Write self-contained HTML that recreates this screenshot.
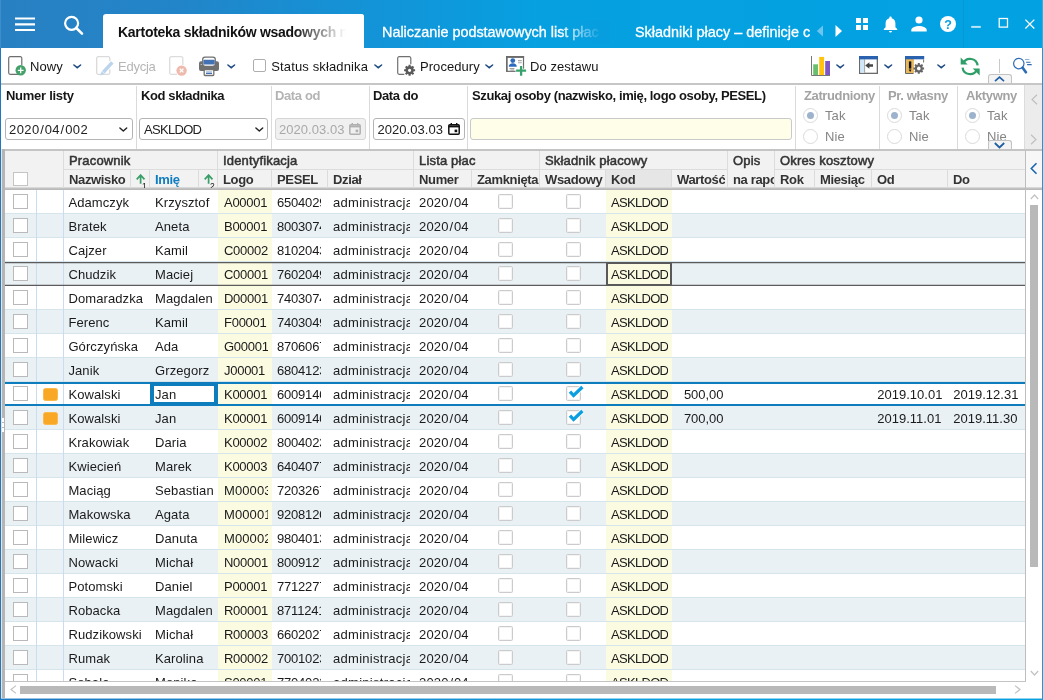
<!DOCTYPE html>
<html lang="pl"><head><meta charset="utf-8"><title>Kartoteka składników wsadowych</title>
<style>
*{box-sizing:border-box}
html,body{margin:0;padding:0}
body{width:1043px;height:700px;position:relative;overflow:hidden;background:#fff;font-family:"Liberation Sans",sans-serif;font-size:13px;color:#222}
.abs{position:absolute}
svg{position:absolute;overflow:visible}
.t{position:absolute;white-space:nowrap;line-height:16px}
.b{font-weight:bold}
#hdr{left:0;top:0;width:1043px;height:48px;background:linear-gradient(to right,#2880c2 0px,#2285c9 180px,#1394d8 380px,#06a0e0 540px,#02a2e2 1043px)}
.tab1{left:103px;top:14px;width:261px;height:34px;background:#fff;border-radius:3px 3px 0 0;overflow:hidden}
.tabt{position:absolute;top:23px;font-size:14.4px;-webkit-text-stroke:0.3px #fff;line-height:18px;white-space:nowrap;color:#fff;overflow:hidden}
.tb{position:absolute;top:58px;line-height:18px;font-size:13px;letter-spacing:0.05px;color:#161616;white-space:nowrap}
.lbl{position:absolute;top:87px;line-height:18px;font-weight:bold;font-size:13px;letter-spacing:-0.38px;white-space:nowrap;color:#161616}
.inp{position:absolute;top:118px;height:22px;border:1px solid #b4b4b4;border-radius:3px;background:#fff;line-height:22px;font-size:13px;padding-left:4px;white-space:nowrap;overflow:hidden}
.vl{position:absolute;top:86px;width:1px;height:63px;background:#dadada}
.rad{position:absolute;width:15px;height:15px;border:1px solid #dadada;border-radius:50%;background:#fff}
.rad.on:after{content:"";position:absolute;left:2.7px;top:2.7px;width:7.600px;height:7.600px;border-radius:50%;background:#9db2cd}
.rt{position:absolute;line-height:16px;font-size:13px;letter-spacing:0.1px;color:#858585;white-space:nowrap}
.gh{position:absolute;line-height:16px;font-weight:bold;font-size:13px;letter-spacing:-0.35px;color:#333;white-space:nowrap;overflow:hidden}
.gm{font-weight:normal;-webkit-text-stroke:0.5px #333;letter-spacing:0.17px}
.hv{position:absolute;width:1px;background:#dcdcdc}
.row{position:absolute;left:5px;width:1020px;height:24px;border-bottom:1px solid #d6e4ec}
.row.alt{background:#e9f1f5}
.c{position:absolute;top:0;height:23px;line-height:26px;padding-left:5px;white-space:nowrap;overflow:hidden;font-size:13px;letter-spacing:0.1px;color:#1a1a1a}
.n{letter-spacing:-0.2px}
.y{background:#fdfde6}
.alt .n{letter-spacing:-0.2px}
.y{background:#fbfbe2}
.cb{position:absolute;width:15px;height:15px;border:1px solid #b9b9b9;background:#fff}
.cb2{position:absolute;width:15px;height:15px;border:1px solid #cbcbcb;border-radius:1.5px;background:#fff;box-shadow:inset 0 0 0 0.5px rgba(200,200,200,0.4)}
.org{position:absolute;left:38px;top:6px;width:15px;height:13px;border-radius:2.5px;background:#f9a825;border:1px solid #fbb94a}
</style></head>
<body>
<div id="app" style="will-change:transform;position:absolute;left:0;top:0;width:1043px;height:700px;overflow:hidden">
<div id="hdr" class="abs">
<svg style="left:15px;top:17px" width="20" height="14" viewBox="0 0 20 14"><path d="M0 1.5h20M0 7.3h20M0 13h20" stroke="#fff" stroke-width="2.2" fill="none"/></svg>
<svg style="left:62px;top:14px" width="22" height="22" viewBox="0 0 22 22"><circle cx="9.600" cy="9.300" r="6.500" stroke="#fff" stroke-width="2.200" fill="none"/><path d="M14.300 14L20 19.700" stroke="#fff" stroke-width="2.600" stroke-linecap="round"/></svg>
<div class="abs tab1"><div class="tabt b" style="left:15px;top:9px;color:#111;-webkit-text-stroke:0;width:232px;font-size:14px;letter-spacing:-0.28px">Kartoteka składników wsadowych n</div><div class="abs" style="left:190px;top:0;width:71px;height:34px;background:linear-gradient(to right,rgba(255,255,255,0),rgba(255,255,255,1) 75%)"></div></div>
<div class="tabt" style="left:382px;width:222px">Naliczanie podstawowych list płac</div>
<div class="abs" style="left:560px;top:20px;width:50px;height:24px;background:linear-gradient(to right,rgba(7,158,223,0),rgba(7,158,223,1) 85%)"></div>
<div class="tabt" style="left:635px;width:176px">Składniki płacy – definicje c</div>
<svg style="left:816.200px;top:25px" width="8" height="12" viewBox="0 0 8 12"><path d="M7 0.5L0.8 6L7 11.5Z" fill="#6cc5ee"/></svg>
<svg style="left:835px;top:25px" width="8" height="12" viewBox="0 0 8 12"><path d="M0.5 0L7 6L0.5 12Z" fill="#fff"/></svg>
<svg style="left:856px;top:18px" width="12" height="12" viewBox="0 0 12 12"><path d="M0 0h5v5H0zM7 0h5v5H7zM0 7h5v5H0zM7 7h5v5H7z" fill="#fff"/></svg>
<svg style="left:883px;top:16px" width="15" height="17" viewBox="0 0 15 17"><path d="M7.5 0.6c-.7 0-1.2.5-1.2 1.2v.5C4 2.9 2.6 4.9 2.6 7.3v4L.8 13.1v.9h13.4v-.9l-1.8-1.8v-4c0-2.4-1.400-4.400-3.700-5V1.800c0-.7-.5-1.200-1.200-1.200zM6 15h3c0 .9-.7 1.500-1.500 1.500S6 15.900 6 15z" fill="#fff"/></svg>
<svg style="left:911px;top:16px" width="16" height="16" viewBox="0 0 16 16"><circle cx="8" cy="4" r="3.6" fill="#fff"/><path d="M0.300 15.500v-1.500c0-2.600 5.100-4 7.700-4s7.700 1.400 7.700 4v1.500z" fill="#fff"/></svg>
<svg style="left:940px;top:16px" width="16" height="16" viewBox="0 0 16 16"><circle cx="8" cy="8" r="8" fill="#fff"/><text x="8" y="12.600" font-family="Liberation Sans,sans-serif" font-weight="bold" font-size="12.500" text-anchor="middle" fill="#07a0e0">?</text></svg>
<div class="abs" style="left:963px;top:0;width:1px;height:48px;background:#0996d4"></div>
<div class="abs" style="left:1042px;top:0;width:1px;height:48px;background:#2cb2e8"></div>
<div class="abs" style="left:0;top:0;width:1px;height:48px;background:#3b8dcc"></div>
<svg style="left:971px;top:18px" width="64" height="12" viewBox="0 0 64 12"><path d="M0.200 8.900h9.600" stroke="#fff" stroke-opacity="0.720" stroke-width="2" fill="none"/><rect x="28.200" y="0.500" width="8.300" height="8.600" stroke="#fff" stroke-width="1.250" fill="none"/><path d="M54.400 1.600l8.900 8.900M63.300 1.600l-8.900 8.900" stroke="#fff" stroke-width="1.300" fill="none"/></svg>
</div>
<div class="abs" id="tbar" style="left:0;top:48px;width:1043px;height:35px;background:#fff"></div>
<svg style="left:8px;top:56px" width="19" height="20" viewBox="0 0 19 20"><path d="M11.500 18.300H2.200a1.500 1.500 0 0 1-1.500-1.500V2.200A1.500 1.500 0 0 1 2.200.7h10.100a1.500 1.500 0 0 1 1.500 1.500V9" stroke="#6e6e6e" stroke-width="1.200" fill="none"/><circle cx="12.700" cy="14.300" r="5.200" fill="#45a06a"/><path d="M12.700 11.400v5.800M9.800 14.300h5.800" stroke="#fff" stroke-width="1.300"/></svg>
<div class="tb" style="left:30px">Nowy</div>
<svg style="left:73.2px;top:63.7px" width="9" height="5" viewBox="0 0 9 5"><path d="M0.900 1L4.250 3.700L7.600 1" stroke="#1d4a82" stroke-width="1.500" fill="none" stroke-linecap="round" stroke-linejoin="miter"/></svg>
<svg style="left:96px;top:56px" width="19" height="20" viewBox="0 0 19 20"><path d="M13.800 13.500v3.300a1.500 1.500 0 0 1-1.500 1.500H2.200a1.500 1.500 0 0 1-1.500-1.500V2.200A1.500 1.500 0 0 1 2.200.7h10.100a1.500 1.500 0 0 1 1.500 1.500V5" stroke="#dadada" stroke-width="1.300" fill="none"/><path d="M16.300 6.400L7.300 16.200" stroke="#bcd5ec" stroke-width="3.500"/><path d="M5.600 15.200l3 2.700-4.500 1.600z" fill="#bcd5ec"/></svg>
<div class="tb" style="left:118px;color:#b5b5b5;letter-spacing:-0.250px">Edycja</div>
<svg style="left:169px;top:56px" width="19" height="20" viewBox="0 0 19 20"><path d="M8 18.300H2.200a1.500 1.500 0 0 1-1.500-1.500V2.200A1.500 1.500 0 0 1 2.200.7h10.100a1.500 1.500 0 0 1 1.500 1.500V9" stroke="#dcdcdc" stroke-width="1.300" fill="none"/><circle cx="12.600" cy="14.600" r="5.200" fill="#efbaae"/><path d="M10.800 12.800l3.600 3.600M14.400 12.800l-3.600 3.600" stroke="#fff" stroke-width="1.300"/></svg>
<svg style="left:199px;top:56px" width="20" height="20" viewBox="0 0 20 20"><rect x="0" y="5.200" width="20" height="9.800" rx="2" fill="#707070"/><path d="M3.100 9V3.400A2.800 2.800 0 0 1 5.900 0.600h8.200a2.800 2.800 0 0 1 2.800 2.800V9z" fill="#707070"/><path d="M4.300 7.800V3.600A1.800 1.800 0 0 1 6.100 1.800h7.800a1.800 1.800 0 0 1 1.800 1.800V7.800a2 2 0 0 1-2 2H6.300a2 2 0 0 1-2-2z" fill="#fff"/><rect x="4.400" y="3.800" width="11.300" height="4.800" rx="0.800" fill="#4272b4"/><rect x="5.200" y="13.500" width="9.600" height="6" rx="0.800" fill="#fff" stroke="#707070" stroke-width="1.300"/><path d="M7 15.900h6" stroke="#aac2e4" stroke-width="1.400"/><path d="M7 17.400h6" stroke="#4272b4" stroke-width="1.200"/><rect x="1.600" y="8" width="1.400" height="0.900" fill="#bbb"/></svg>
<svg style="left:227.2px;top:63.7px" width="9" height="5" viewBox="0 0 9 5"><path d="M0.900 1L4.250 3.700L7.600 1" stroke="#1d4a82" stroke-width="1.500" fill="none" stroke-linecap="round" stroke-linejoin="miter"/></svg>
<div class="abs" style="left:253px;top:59px;width:13px;height:13px;border:1px solid #aeaeae;border-radius:2px;background:#fff"></div>
<div class="tb" style="left:271.300px;letter-spacing:0.130px">Status składnika</div>
<svg style="left:374.2px;top:63.7px" width="9" height="5" viewBox="0 0 9 5"><path d="M0.900 1L4.250 3.700L7.600 1" stroke="#1d4a82" stroke-width="1.500" fill="none" stroke-linecap="round" stroke-linejoin="miter"/></svg>
<svg style="left:397px;top:56px" width="19" height="20" viewBox="0 0 19 20"><path d="M7.300 18.300H2.200a1.500 1.500 0 0 1-1.500-1.500V2.200A1.500 1.500 0 0 1 2.200.7h10.100a1.500 1.500 0 0 1 1.500 1.500V8.200" stroke="#707070" stroke-width="1.200" fill="none"/><g transform="translate(12.600 14.300)"><circle r="2.900" fill="none" stroke="#5a5a5a" stroke-width="2.600"/><g stroke="#5a5a5a" stroke-width="2.100"><path d="M0-5.500v2M0 5.500v-2M-5.500 0h2M5.500 0h-2M-3.900-3.900l1.400 1.400M3.900 3.900l-1.400-1.400M-3.900 3.900l1.400-1.400M3.900-3.900l-1.400 1.400"/></g></g></svg>
<div class="tb" style="left:420px">Procedury</div>
<svg style="left:485.2px;top:63.7px" width="9" height="5" viewBox="0 0 9 5"><path d="M0.900 1L4.250 3.700L7.600 1" stroke="#1d4a82" stroke-width="1.500" fill="none" stroke-linecap="round" stroke-linejoin="miter"/></svg>
<svg style="left:506px;top:56px" width="21" height="21" viewBox="0 0 21 21"><rect x="0.700" y="0.700" width="16.800" height="14.600" fill="#fff" stroke="#6a6a6a" stroke-width="1.200"/><path d="M0.100 1h18" stroke="#6a6a6a" stroke-width="1.800"/><path d="M0.800 0.200v15.600" stroke="#6a6a6a" stroke-width="1.500"/><circle cx="6.800" cy="4.600" r="2.400" fill="#2e6bbd"/><path d="M2.800 10.700c0-2.200 1.600-3.400 4-3.400s4 1.200 4 3.400z" fill="#2e6bbd"/><path d="M12 4.600h3.800M12 6.800h3.800" stroke="#a8a8a8" stroke-width="1.100"/><path d="M3.500 12.600h5M4.500 14h3.500" stroke="#999" stroke-width="1"/><rect x="9.200" y="9.500" width="11.500" height="11.500" fill="#fff" opacity="0"/><path d="M15.100 9.400v11M9.600 14.700h11" stroke="#fff" stroke-width="4"/><path d="M15.100 10v9.700M10.100 14.700h10" stroke="#37a26b" stroke-width="2.300"/></svg>
<div class="tb" style="left:530px">Do zestawu</div>
<svg style="left:811px;top:56px" width="20" height="20" viewBox="0 0 20 20"><rect x="2.200" y="8.300" width="4.800" height="11" fill="#6abf6e"/><rect x="8.200" y="0.900" width="4.900" height="18.400" fill="#ffc20e"/><rect x="14.200" y="5" width="4.800" height="14.300" fill="#7e55c4"/><path d="M0.500 0v19.500H19" stroke="#777" stroke-width="1" fill="none"/></svg>
<svg style="left:836.2px;top:63.7px" width="9" height="5" viewBox="0 0 9 5"><path d="M0.900 1L4.250 3.700L7.600 1" stroke="#1d4a82" stroke-width="1.500" fill="none" stroke-linecap="round" stroke-linejoin="miter"/></svg>
<svg style="left:859px;top:56px" width="19" height="18" viewBox="0 0 19 18"><rect x="0.650" y="0.650" width="17.700" height="16.700" fill="#fff" stroke="#6a6a6a" stroke-width="1.300"/><rect x="1.300" y="3.400" width="4" height="13.300" fill="#cfe8fa"/><path d="M5.600 3.400v13.400" stroke="#9a9a9a" stroke-width="0.900"/><rect x="0" y="0" width="19" height="3.400" fill="#2b62b0"/><path d="M14 9.500h-5" stroke="#444" stroke-width="2.500"/><path d="M6.200 9.500l4.200-3.200v6.400z" fill="#444"/></svg>
<svg style="left:884.2px;top:63.7px" width="9" height="5" viewBox="0 0 9 5"><path d="M0.900 1L4.250 3.700L7.600 1" stroke="#1d4a82" stroke-width="1.500" fill="none" stroke-linecap="round" stroke-linejoin="miter"/></svg>
<svg style="left:905px;top:56px" width="20" height="18" viewBox="0 0 20 18"><rect x="0.500" y="3" width="8.400" height="14.400" fill="#e8b95c"/><path d="M0.500 3v14.500h8" stroke="#666" stroke-width="1" fill="none"/><path d="M18.600 3.500v3" stroke="#777" stroke-width="1"/><rect x="0" y="0" width="19.200" height="3.300" fill="#2b62b0"/><path d="M5.100 5.400v7.200" stroke="#111" stroke-width="2.400"/><path d="M3.700 13.600h2.800l-1.400 2.400z" fill="#111"/><g transform="translate(13.800 12.400)"><circle r="2.900" fill="#fff" stroke="#666" stroke-width="2.200"/><g stroke="#666" stroke-width="2"><path d="M0-5.300v2M0 5.300v-2M-5.300 0h2M5.300 0h-2M-3.750-3.750l1.400 1.400M3.750 3.750l-1.400-1.400M-3.750 3.750l1.400-1.400M3.750-3.750l-1.400 1.400"/></g></g></svg>
<svg style="left:936.5px;top:63.7px" width="9" height="5" viewBox="0 0 9 5"><path d="M0.900 1L4.250 3.700L7.600 1" stroke="#1d4a82" stroke-width="1.500" fill="none" stroke-linecap="round" stroke-linejoin="miter"/></svg>
<svg style="left:959.500px;top:55.500px" width="21" height="21" viewBox="0 0 21 21"><g fill="none" stroke="#2f9e68" stroke-width="2.200"><path d="M17.630 9.440A7.600 7.600 0 0 0 3.210 7.290"/><path d="M2.570 11.560A7.600 7.600 0 0 0 16.990 13.710"/></g><path d="M0.700 1.500v7h7z" fill="#2f9e68"/><path d="M19.700 19.500v-7h-7z" fill="#2f9e68"/></svg>
<div class="abs" style="left:999px;top:59px;width:1px;height:14px;background:#c8c8c8"></div>
<svg style="left:1012.200px;top:57px" width="21" height="18" viewBox="0 0 21 18"><circle cx="6.800" cy="6.600" r="5.200" fill="#fff" stroke="#2e6cb5" stroke-width="1.200"/><path d="M10.600 10.800l3.300 4.400" stroke="#2e6cb5" stroke-width="2.700" stroke-linecap="round"/><path d="M13 2.500h4.400" stroke="#8eb0da" stroke-width="1.100"/><path d="M14.100 5.300h4.400M15.100 7.600h4.600" stroke="#2e6cb5" stroke-width="1.100"/></svg>
<div class="abs" style="left:1px;top:83px;width:1041px;height:2px;background:#c6c6c6"></div>
<div class="abs" style="left:988px;top:74px;width:24px;height:9px;border:1px solid #c2c2c2;border-bottom:none;border-radius:3px 3px 0 0;background:#f4f4f4"></div>
<svg style="left:994.300px;top:76px" width="11" height="6" viewBox="0 0 11 6"><path d="M1 5.200L5.500 1.200L10 5.200" stroke="#2560a4" stroke-width="1.700" fill="none" stroke-linecap="butt" stroke-linejoin="miter"/></svg>
<div class="abs" id="filt" style="left:1px;top:85px;width:1041px;height:64px;background:#fff"></div>
<div class="vl" style="left:136px"></div>
<div class="vl" style="left:271px"></div>
<div class="vl" style="left:369px"></div>
<div class="vl" style="left:467px"></div>
<div class="vl" style="left:795px"></div>
<div class="vl" style="left:879px"></div>
<div class="vl" style="left:957px"></div>
<div class="lbl" style="left:6px;letter-spacing:-0.270px">Numer listy</div>
<div class="lbl" style="left:141px">Kod składnika</div>
<div class="lbl" style="left:275px;color:#b4b4b4">Data od</div>
<div class="lbl" style="left:373px">Data do</div>
<div class="lbl" style="left:472px">Szukaj osoby (nazwisko, imię, logo osoby, PESEL)</div>
<div class="inp" style="left:5px;width:128px;padding-left:3px;letter-spacing:0.400px">2020<span style="margin:0 0.600px">/</span>04<span style="margin:0 0.600px">/</span>002</div>
<svg style="left:119px;top:127px" width="9" height="6" viewBox="0 0 9 6"><path d="M0.900 0.900L4.300 4L7.700 0.900" stroke="#222" stroke-width="1.400" fill="none" stroke-linecap="round" stroke-linejoin="round"/></svg>
<div class="inp" style="left:139px;width:129px;letter-spacing:-0.700px">ASKLDOD</div>
<svg style="left:255px;top:127px" width="9" height="6" viewBox="0 0 9 6"><path d="M0.900 0.900L4.300 4L7.700 0.900" stroke="#222" stroke-width="1.400" fill="none" stroke-linecap="round" stroke-linejoin="round"/></svg>
<div class="inp" style="left:275px;width:91px;background:#f0f0f0;border-color:#d6d6d6;color:#a9a9a9;padding-left:3px;letter-spacing:0.050px">2020.03.03</div>
<svg style="left:349px;top:123px" width="12" height="12" viewBox="0 0 12 12"><rect x="0.800" y="1.800" width="10.400" height="9.400" rx="1" fill="none" stroke="#b0b0b0" stroke-width="1.500"/><path d="M0.800 3.400h10.400" stroke="#b0b0b0" stroke-width="2"/><path d="M3.300 0v2.200M8.700 0v2.200" stroke="#b0b0b0" stroke-width="1.400"/><rect x="6.600" y="6.600" width="2.600" height="2.600" fill="#b0b0b0"/></svg>
<div class="inp" style="left:373px;width:92px;padding-left:3.500px;letter-spacing:0.050px">2020.03.03</div>
<svg style="left:448px;top:123px" width="12" height="12" viewBox="0 0 12 12"><rect x="0.800" y="1.800" width="10.400" height="9.400" rx="1" fill="none" stroke="#111" stroke-width="1.500"/><path d="M0.800 3.400h10.400" stroke="#111" stroke-width="2"/><path d="M3.300 0v2.200M8.700 0v2.200" stroke="#111" stroke-width="1.400"/><rect x="6.600" y="6.600" width="2.600" height="2.600" fill="#111"/></svg>
<div class="inp" style="left:470px;width:322px;background:#fffee9;border-color:#c9c9c9"></div>
<div class="lbl" style="left:804px;color:#a3a3a3">Zatrudniony</div>
<div class="rad on" style="left:803px;top:108px"></div><div class="rt" style="left:825px;top:108px">Tak</div>
<div class="rad" style="left:803px;top:129px"></div><div class="rt" style="left:825px;top:129px">Nie</div>
<div class="lbl" style="left:888px;color:#a3a3a3">Pr. własny</div>
<div class="rad on" style="left:887px;top:108px"></div><div class="rt" style="left:909px;top:108px">Tak</div>
<div class="rad" style="left:887px;top:129px"></div><div class="rt" style="left:909px;top:129px">Nie</div>
<div class="lbl" style="left:966px;color:#a3a3a3">Aktywny</div>
<div class="rad on" style="left:965px;top:108px"></div><div class="rt" style="left:987px;top:108px">Tak</div>
<div class="rad" style="left:965px;top:129px"></div><div class="rt" style="left:987px;top:129px">Nie</div>
<div class="abs" style="left:1024px;top:85px;width:18px;height:64px;background:#ececec;border-left:1px solid #dcdcdc"></div>
<svg style="left:1030.600px;top:94px" width="7" height="11" viewBox="0 0 7 11"><path d="M6 0.800L1 5.500L6 10.200" stroke="#c0c0c0" stroke-width="1.200" fill="none"/></svg>
<svg style="left:1030.400px;top:133.600px" width="7" height="11" viewBox="0 0 7 11"><path d="M1 0.800L6 5.500L1 10.200" stroke="#c0c0c0" stroke-width="1.200" fill="none"/></svg>
<div class="abs" style="left:988px;top:140px;width:24px;height:9px;border:1px solid #c2c2c2;border-bottom:none;border-radius:3px 3px 0 0;background:#f4f4f4"></div>
<svg style="left:994px;top:142px" width="11" height="7" viewBox="0 0 11 7"><path d="M0.800 1L5.500 5.400L10.200 1" stroke="#1f5f9f" stroke-width="1.800" fill="none" stroke-linecap="butt" stroke-linejoin="miter"/></svg>
<div class="abs" style="left:2px;top:149px;width:1040px;height:2px;background:#c4c4c4"></div>
<div class="abs" style="left:1px;top:149px;width:1px;height:549px;background:#e9e3e0"></div>
<div class="abs" style="left:2px;top:149px;width:3px;height:549px;background:#b5b5b5"></div>
<div class="abs" style="left:2px;top:418px;width:2px;height:4px;background:#fff"></div>
<div class="abs" style="left:2px;top:423px;width:2px;height:4px;background:#fff"></div>
<div class="abs" style="left:2px;top:428px;width:2px;height:4px;background:#fff"></div>
<div class="abs" id="ghead" style="left:5px;top:151px;width:1037px;height:37px;background:#f2f2f2"></div>
<div class="abs" style="left:606px;top:170px;width:66px;height:18px;background:#e6e6e6"></div>
<div class="abs" style="left:5px;top:187px;width:1037px;height:3px;background:linear-gradient(to bottom,#d8d8d8 0,#d8d8d8 1px,#c2c2c2 1px,#c2c2c2 2px,#b9b9b9 2px)"></div>
<div class="abs" style="left:64px;top:169px;width:664px;height:1px;background:#dcdcdc"></div>
<div class="abs" style="left:775px;top:169px;width:250px;height:1px;background:#dcdcdc"></div>
<div class="hv" style="left:63px;top:151px;height:37px"></div>
<div class="hv" style="left:217px;top:151px;height:37px"></div>
<div class="hv" style="left:413px;top:151px;height:37px"></div>
<div class="hv" style="left:539px;top:151px;height:37px"></div>
<div class="hv" style="left:727px;top:151px;height:37px"></div>
<div class="hv" style="left:774px;top:151px;height:37px"></div>
<div class="hv" style="left:130px;top:170px;height:18px"></div>
<div class="hv" style="left:149px;top:170px;height:18px"></div>
<div class="hv" style="left:198px;top:170px;height:18px"></div>
<div class="hv" style="left:271px;top:170px;height:18px"></div>
<div class="hv" style="left:327px;top:170px;height:18px"></div>
<div class="hv" style="left:471px;top:170px;height:18px"></div>
<div class="hv" style="left:605px;top:170px;height:18px"></div>
<div class="hv" style="left:671px;top:170px;height:18px"></div>
<div class="hv" style="left:814px;top:170px;height:18px"></div>
<div class="hv" style="left:871px;top:170px;height:18px"></div>
<div class="hv" style="left:947px;top:170px;height:18px"></div>
<div class="gh gm" style="left:69px;top:153px;width:140px">Pracownik</div>
<div class="gh gm" style="left:223px;top:153px;width:180px">Identyfikacja</div>
<div class="gh gm" style="left:419px;top:153px;width:110px">Lista płac</div>
<div class="gh gm" style="left:545px;top:153px;width:170px">Składnik płacowy</div>
<div class="gh gm" style="left:733px;top:153px;width:40px">Opis</div>
<div class="gh gm" style="left:780px;top:153px;width:200px">Okres kosztowy</div>
<div class="gh" style="left:69px;top:172px;width:61px;">Nazwisko</div>
<div class="gh" style="left:155px;top:172px;width:43px;color:#0f7cc0">Imię</div>
<div class="gh" style="left:223px;top:172px;width:48px;">Logo</div>
<div class="gh" style="left:277px;top:172px;width:50px;">PESEL</div>
<div class="gh" style="left:333px;top:172px;width:80px;">Dział</div>
<div class="gh" style="left:419px;top:172px;width:52px;">Numer</div>
<div class="gh" style="left:477px;top:172px;width:62px;">Zamknięta</div>
<div class="gh" style="left:545px;top:172px;width:60px;">Wsadowy</div>
<div class="gh" style="left:611px;top:172px;width:60px;">Kod</div>
<div class="gh" style="left:677px;top:172px;width:48px;text-align:right">Wartość</div>
<div class="gh" style="left:733px;top:172px;width:41px;">na raport</div>
<div class="gh" style="left:780px;top:172px;width:34px;">Rok</div>
<div class="gh" style="left:820px;top:172px;width:51px;">Miesiąc</div>
<div class="gh" style="left:877px;top:172px;width:60px;">Od</div>
<div class="gh" style="left:953px;top:172px;width:60px;">Do</div>
<svg style="left:136px;top:174px;overflow:hidden" width="14" height="14" viewBox="0 0 14 14"><path d="M4.600 9.800V1.200M0.700 5.300L4.600 1.100L8.500 5.300" stroke="#3a9e68" stroke-width="1.700" fill="none"/><text x="6" y="14.600" font-family="Liberation Sans,sans-serif" font-size="8.500" fill="#111">1</text></svg>
<svg style="left:204.4px;top:174px;overflow:hidden" width="14" height="14" viewBox="0 0 14 14"><path d="M4.600 9.800V1.200M0.700 5.300L4.600 1.100L8.500 5.300" stroke="#3a9e68" stroke-width="1.700" fill="none"/><text x="6" y="14.600" font-family="Liberation Sans,sans-serif" font-size="8.500" fill="#111">2</text></svg>
<div class="cb" style="left:13px;top:172px;height:14px;border-color:#c4c4c4"></div>
<div class="abs" style="left:1026px;top:151px;width:16px;height:36px;background:#f7f7f7"></div>
<svg style="left:1030px;top:162.400px" width="8" height="13" viewBox="0 0 8 13"><path d="M6.500 1.200L1.300 6.500L6.500 11.800" stroke="#1c66b0" stroke-width="1.600" fill="none"/></svg>
<div class="abs" style="left:1025px;top:151px;width:1px;height:531px;background:#bdbdbd"></div>
<div class="abs" style="left:1026px;top:190px;width:16px;height:492px;background:#fff"></div>
<svg style="left:1029.500px;top:194.300px" width="9" height="6" viewBox="0 0 9 6"><path d="M0.800 5L4.500 1L8.200 5" stroke="#c2c2c2" stroke-width="1.200" fill="none"/></svg>
<div class="abs" style="left:1030px;top:205px;width:8px;height:361.700px;background:#b9b9b9"></div>
<svg style="left:1029.500px;top:669.500px" width="9" height="6" viewBox="0 0 9 6"><path d="M0.800 1L4.500 5L8.200 1" stroke="#c2c2c2" stroke-width="1.200" fill="none"/></svg>
<div class="abs" id="gbody" style="left:0;top:190px;width:1025px;height:491px;overflow:hidden">
<div class="row" style="top:0px"><div class="abs" style="left:31px;top:0;width:1px;height:24px;background:#c9dcf0"></div><div class="abs" style="left:58px;top:0;width:1px;height:24px;background:#c9dcf0"></div><div class="cb" style="left:8px;top:4px"></div><div class="c" style="left:59px;width:86px;padding-left:4.400px">Adamczyk</div><div class="c" style="left:145px;width:63px">Krzysztof</div><div class="c y" style="left:213px;width:54px;padding:0"></div><div class="c n" style="left:213px;width:49.500px;padding-left:6px;letter-spacing:-0.270px">A00001</div><div class="c n" style="left:267px;width:48.900px">6504029</div><div class="c" style="left:323px;width:81.500px;letter-spacing:0.280px">administracja</div><div class="c" style="left:409px;width:58px;letter-spacing:0.200px">2020<span style="margin:0 0.700px">/</span>04</div><div class="cb2" style="left:493px;top:4px"></div><div class="cb2" style="left:561px;top:4px"></div><div class="c y" style="left:601px;width:66px;padding:0"></div><div class="c" style="left:601px;width:61.500px;letter-spacing:-0.700px">ASKLDOD</div></div>
<div class="row alt" style="top:24px"><div class="abs" style="left:31px;top:0;width:1px;height:24px;background:#c9dcf0"></div><div class="abs" style="left:58px;top:0;width:1px;height:24px;background:#c9dcf0"></div><div class="cb" style="left:8px;top:4px"></div><div class="c" style="left:59px;width:86px;padding-left:4.400px">Bratek</div><div class="c" style="left:145px;width:63px">Aneta</div><div class="c y" style="left:213px;width:54px;padding:0"></div><div class="c n" style="left:213px;width:49.500px;padding-left:6px;letter-spacing:-0.270px">B00001</div><div class="c n" style="left:267px;width:48.900px">8003074</div><div class="c" style="left:323px;width:81.500px;letter-spacing:0.280px">administracja</div><div class="c" style="left:409px;width:58px;letter-spacing:0.200px">2020<span style="margin:0 0.700px">/</span>04</div><div class="cb2" style="left:493px;top:4px"></div><div class="cb2" style="left:561px;top:4px"></div><div class="c y" style="left:601px;width:66px;padding:0"></div><div class="c" style="left:601px;width:61.500px;letter-spacing:-0.700px">ASKLDOD</div></div>
<div class="row" style="top:48px"><div class="abs" style="left:31px;top:0;width:1px;height:24px;background:#c9dcf0"></div><div class="abs" style="left:58px;top:0;width:1px;height:24px;background:#c9dcf0"></div><div class="cb" style="left:8px;top:4px"></div><div class="c" style="left:59px;width:86px;padding-left:4.400px">Cajzer</div><div class="c" style="left:145px;width:63px">Kamil</div><div class="c y" style="left:213px;width:54px;padding:0"></div><div class="c n" style="left:213px;width:49.500px;padding-left:6px;letter-spacing:-0.270px">C00002</div><div class="c n" style="left:267px;width:48.900px">8102043</div><div class="c" style="left:323px;width:81.500px;letter-spacing:0.280px">administracja</div><div class="c" style="left:409px;width:58px;letter-spacing:0.200px">2020<span style="margin:0 0.700px">/</span>04</div><div class="cb2" style="left:493px;top:4px"></div><div class="cb2" style="left:561px;top:4px"></div><div class="c y" style="left:601px;width:66px;padding:0"></div><div class="c" style="left:601px;width:61.500px;letter-spacing:-0.700px">ASKLDOD</div></div>
<div class="row alt" style="top:72px"><div class="abs" style="left:31px;top:0;width:1px;height:24px;background:#c9dcf0"></div><div class="abs" style="left:58px;top:0;width:1px;height:24px;background:#c9dcf0"></div><div class="cb" style="left:8px;top:4px"></div><div class="c" style="left:59px;width:86px;padding-left:4.400px">Chudzik</div><div class="c" style="left:145px;width:63px">Maciej</div><div class="c y" style="left:213px;width:54px;padding:0"></div><div class="c n" style="left:213px;width:49.500px;padding-left:6px;letter-spacing:-0.270px">C00001</div><div class="c n" style="left:267px;width:48.900px">7602049</div><div class="c" style="left:323px;width:81.500px;letter-spacing:0.280px">administracja</div><div class="c" style="left:409px;width:58px;letter-spacing:0.200px">2020<span style="margin:0 0.700px">/</span>04</div><div class="cb2" style="left:493px;top:4px"></div><div class="cb2" style="left:561px;top:4px"></div><div class="c y" style="left:601px;width:66px;padding:0"></div><div class="c" style="left:601px;width:61.500px;letter-spacing:-0.700px">ASKLDOD</div></div>
<div class="row" style="top:96px"><div class="abs" style="left:31px;top:0;width:1px;height:24px;background:#c9dcf0"></div><div class="abs" style="left:58px;top:0;width:1px;height:24px;background:#c9dcf0"></div><div class="cb" style="left:8px;top:4px"></div><div class="c" style="left:59px;width:86px;padding-left:4.400px">Domaradzka</div><div class="c" style="left:145px;width:63px">Magdalena</div><div class="c y" style="left:213px;width:54px;padding:0"></div><div class="c n" style="left:213px;width:49.500px;padding-left:6px;letter-spacing:-0.270px">D00001</div><div class="c n" style="left:267px;width:48.900px">7403074</div><div class="c" style="left:323px;width:81.500px;letter-spacing:0.280px">administracja</div><div class="c" style="left:409px;width:58px;letter-spacing:0.200px">2020<span style="margin:0 0.700px">/</span>04</div><div class="cb2" style="left:493px;top:4px"></div><div class="cb2" style="left:561px;top:4px"></div><div class="c y" style="left:601px;width:66px;padding:0"></div><div class="c" style="left:601px;width:61.500px;letter-spacing:-0.700px">ASKLDOD</div></div>
<div class="row alt" style="top:120px"><div class="abs" style="left:31px;top:0;width:1px;height:24px;background:#c9dcf0"></div><div class="abs" style="left:58px;top:0;width:1px;height:24px;background:#c9dcf0"></div><div class="cb" style="left:8px;top:4px"></div><div class="c" style="left:59px;width:86px;padding-left:4.400px">Ferenc</div><div class="c" style="left:145px;width:63px">Kamil</div><div class="c y" style="left:213px;width:54px;padding:0"></div><div class="c n" style="left:213px;width:49.500px;padding-left:6px;letter-spacing:-0.270px">F00001</div><div class="c n" style="left:267px;width:48.900px">7403049</div><div class="c" style="left:323px;width:81.500px;letter-spacing:0.280px">administracja</div><div class="c" style="left:409px;width:58px;letter-spacing:0.200px">2020<span style="margin:0 0.700px">/</span>04</div><div class="cb2" style="left:493px;top:4px"></div><div class="cb2" style="left:561px;top:4px"></div><div class="c y" style="left:601px;width:66px;padding:0"></div><div class="c" style="left:601px;width:61.500px;letter-spacing:-0.700px">ASKLDOD</div></div>
<div class="row" style="top:144px"><div class="abs" style="left:31px;top:0;width:1px;height:24px;background:#c9dcf0"></div><div class="abs" style="left:58px;top:0;width:1px;height:24px;background:#c9dcf0"></div><div class="cb" style="left:8px;top:4px"></div><div class="c" style="left:59px;width:86px;padding-left:4.400px">Górczyńska</div><div class="c" style="left:145px;width:63px">Ada</div><div class="c y" style="left:213px;width:54px;padding:0"></div><div class="c n" style="left:213px;width:49.500px;padding-left:6px;letter-spacing:-0.270px">G00001</div><div class="c n" style="left:267px;width:48.900px">8706067</div><div class="c" style="left:323px;width:81.500px;letter-spacing:0.280px">administracja</div><div class="c" style="left:409px;width:58px;letter-spacing:0.200px">2020<span style="margin:0 0.700px">/</span>04</div><div class="cb2" style="left:493px;top:4px"></div><div class="cb2" style="left:561px;top:4px"></div><div class="c y" style="left:601px;width:66px;padding:0"></div><div class="c" style="left:601px;width:61.500px;letter-spacing:-0.700px">ASKLDOD</div></div>
<div class="row alt" style="top:168px"><div class="abs" style="left:31px;top:0;width:1px;height:24px;background:#c9dcf0"></div><div class="abs" style="left:58px;top:0;width:1px;height:24px;background:#c9dcf0"></div><div class="cb" style="left:8px;top:4px"></div><div class="c" style="left:59px;width:86px;padding-left:4.400px">Janik</div><div class="c" style="left:145px;width:63px">Grzegorz</div><div class="c y" style="left:213px;width:54px;padding:0"></div><div class="c n" style="left:213px;width:49.500px;padding-left:6px;letter-spacing:-0.270px">J00001</div><div class="c n" style="left:267px;width:48.900px">6804123</div><div class="c" style="left:323px;width:81.500px;letter-spacing:0.280px">administracja</div><div class="c" style="left:409px;width:58px;letter-spacing:0.200px">2020<span style="margin:0 0.700px">/</span>04</div><div class="cb2" style="left:493px;top:4px"></div><div class="cb2" style="left:561px;top:4px"></div><div class="c y" style="left:601px;width:66px;padding:0"></div><div class="c" style="left:601px;width:61.500px;letter-spacing:-0.700px">ASKLDOD</div></div>
<div class="row" style="top:192px"><div class="abs" style="left:31px;top:0;width:1px;height:24px;background:#c9dcf0"></div><div class="abs" style="left:58px;top:0;width:1px;height:24px;background:#c9dcf0"></div><div class="cb" style="left:8px;top:4px"></div><div class="org"></div><div class="c" style="left:59px;width:86px;padding-left:4.400px">Kowalski</div><div class="c" style="left:145px;width:63px">Jan</div><div class="c y" style="left:213px;width:54px;padding:0"></div><div class="c n" style="left:213px;width:49.500px;padding-left:6px;letter-spacing:-0.270px">K00001</div><div class="c n" style="left:267px;width:48.900px">6009140</div><div class="c" style="left:323px;width:81.500px;letter-spacing:0.280px">administracja</div><div class="c" style="left:409px;width:58px;letter-spacing:0.200px">2020<span style="margin:0 0.700px">/</span>04</div><div class="cb2" style="left:493px;top:4px"></div><div class="cb2" style="left:561px;top:4px"></div><svg style="left:562px;top:3px" width="18" height="14" viewBox="0 0 18 14"><path d="M3 6.600L6.600 10.500L15.400 2" stroke="#fff" stroke-width="5.200" fill="none"/><path d="M3 6.600L6.600 10.500L15.400 2" stroke="#0c9fe0" stroke-width="3.300" fill="none"/></svg><div class="c y" style="left:601px;width:66px;padding:0"></div><div class="c" style="left:601px;width:61.500px;letter-spacing:-0.700px">ASKLDOD</div><div class="c" style="left:667px;width:56px;text-align:right;padding-right:4.600px;padding-left:0;letter-spacing:-0.050px">500,00</div><div class="c" style="left:867px;width:76px;padding-left:5.300px;letter-spacing:0">2019.10.01</div><div class="c" style="left:943px;width:76px;padding-left:5.300px;letter-spacing:0">2019.12.31</div></div>
<div class="row alt" style="top:216px"><div class="abs" style="left:31px;top:0;width:1px;height:24px;background:#c9dcf0"></div><div class="abs" style="left:58px;top:0;width:1px;height:24px;background:#c9dcf0"></div><div class="cb" style="left:8px;top:4px"></div><div class="org"></div><div class="c" style="left:59px;width:86px;padding-left:4.400px">Kowalski</div><div class="c" style="left:145px;width:63px">Jan</div><div class="c y" style="left:213px;width:54px;padding:0"></div><div class="c n" style="left:213px;width:49.500px;padding-left:6px;letter-spacing:-0.270px">K00001</div><div class="c n" style="left:267px;width:48.900px">6009140</div><div class="c" style="left:323px;width:81.500px;letter-spacing:0.280px">administracja</div><div class="c" style="left:409px;width:58px;letter-spacing:0.200px">2020<span style="margin:0 0.700px">/</span>04</div><div class="cb2" style="left:493px;top:4px"></div><div class="cb2" style="left:561px;top:4px"></div><svg style="left:562px;top:3px" width="18" height="14" viewBox="0 0 18 14"><path d="M3 6.600L6.600 10.500L15.400 2" stroke="#fff" stroke-width="5.200" fill="none"/><path d="M3 6.600L6.600 10.500L15.400 2" stroke="#0c9fe0" stroke-width="3.300" fill="none"/></svg><div class="c y" style="left:601px;width:66px;padding:0"></div><div class="c" style="left:601px;width:61.500px;letter-spacing:-0.700px">ASKLDOD</div><div class="c" style="left:667px;width:56px;text-align:right;padding-right:4.600px;padding-left:0;letter-spacing:-0.050px">700,00</div><div class="c" style="left:867px;width:76px;padding-left:5.300px;letter-spacing:0">2019.11.01</div><div class="c" style="left:943px;width:76px;padding-left:5.300px;letter-spacing:0">2019.11.30</div></div>
<div class="row" style="top:240px"><div class="abs" style="left:31px;top:0;width:1px;height:24px;background:#c9dcf0"></div><div class="abs" style="left:58px;top:0;width:1px;height:24px;background:#c9dcf0"></div><div class="cb" style="left:8px;top:4px"></div><div class="c" style="left:59px;width:86px;padding-left:4.400px">Krakowiak</div><div class="c" style="left:145px;width:63px">Daria</div><div class="c y" style="left:213px;width:54px;padding:0"></div><div class="c n" style="left:213px;width:49.500px;padding-left:6px;letter-spacing:-0.270px">K00002</div><div class="c n" style="left:267px;width:48.900px">8004023</div><div class="c" style="left:323px;width:81.500px;letter-spacing:0.280px">administracja</div><div class="c" style="left:409px;width:58px;letter-spacing:0.200px">2020<span style="margin:0 0.700px">/</span>04</div><div class="cb2" style="left:493px;top:4px"></div><div class="cb2" style="left:561px;top:4px"></div><div class="c y" style="left:601px;width:66px;padding:0"></div><div class="c" style="left:601px;width:61.500px;letter-spacing:-0.700px">ASKLDOD</div></div>
<div class="row alt" style="top:264px"><div class="abs" style="left:31px;top:0;width:1px;height:24px;background:#c9dcf0"></div><div class="abs" style="left:58px;top:0;width:1px;height:24px;background:#c9dcf0"></div><div class="cb" style="left:8px;top:4px"></div><div class="c" style="left:59px;width:86px;padding-left:4.400px">Kwiecień</div><div class="c" style="left:145px;width:63px">Marek</div><div class="c y" style="left:213px;width:54px;padding:0"></div><div class="c n" style="left:213px;width:49.500px;padding-left:6px;letter-spacing:-0.270px">K00003</div><div class="c n" style="left:267px;width:48.900px">6404077</div><div class="c" style="left:323px;width:81.500px;letter-spacing:0.280px">administracja</div><div class="c" style="left:409px;width:58px;letter-spacing:0.200px">2020<span style="margin:0 0.700px">/</span>04</div><div class="cb2" style="left:493px;top:4px"></div><div class="cb2" style="left:561px;top:4px"></div><div class="c y" style="left:601px;width:66px;padding:0"></div><div class="c" style="left:601px;width:61.500px;letter-spacing:-0.700px">ASKLDOD</div></div>
<div class="row" style="top:288px"><div class="abs" style="left:31px;top:0;width:1px;height:24px;background:#c9dcf0"></div><div class="abs" style="left:58px;top:0;width:1px;height:24px;background:#c9dcf0"></div><div class="cb" style="left:8px;top:4px"></div><div class="c" style="left:59px;width:86px;padding-left:4.400px">Maciąg</div><div class="c" style="left:145px;width:63px">Sebastian</div><div class="c y" style="left:213px;width:54px;padding:0"></div><div class="c n" style="left:213px;width:49.500px;padding-left:6px;letter-spacing:0.100px">M00003</div><div class="c n" style="left:267px;width:48.900px">7203267</div><div class="c" style="left:323px;width:81.500px;letter-spacing:0.280px">administracja</div><div class="c" style="left:409px;width:58px;letter-spacing:0.200px">2020<span style="margin:0 0.700px">/</span>04</div><div class="cb2" style="left:493px;top:4px"></div><div class="cb2" style="left:561px;top:4px"></div><div class="c y" style="left:601px;width:66px;padding:0"></div><div class="c" style="left:601px;width:61.500px;letter-spacing:-0.700px">ASKLDOD</div></div>
<div class="row alt" style="top:312px"><div class="abs" style="left:31px;top:0;width:1px;height:24px;background:#c9dcf0"></div><div class="abs" style="left:58px;top:0;width:1px;height:24px;background:#c9dcf0"></div><div class="cb" style="left:8px;top:4px"></div><div class="c" style="left:59px;width:86px;padding-left:4.400px">Makowska</div><div class="c" style="left:145px;width:63px">Agata</div><div class="c y" style="left:213px;width:54px;padding:0"></div><div class="c n" style="left:213px;width:49.500px;padding-left:6px;letter-spacing:0.100px">M00001</div><div class="c n" style="left:267px;width:48.900px">9208120</div><div class="c" style="left:323px;width:81.500px;letter-spacing:0.280px">administracja</div><div class="c" style="left:409px;width:58px;letter-spacing:0.200px">2020<span style="margin:0 0.700px">/</span>04</div><div class="cb2" style="left:493px;top:4px"></div><div class="cb2" style="left:561px;top:4px"></div><div class="c y" style="left:601px;width:66px;padding:0"></div><div class="c" style="left:601px;width:61.500px;letter-spacing:-0.700px">ASKLDOD</div></div>
<div class="row" style="top:336px"><div class="abs" style="left:31px;top:0;width:1px;height:24px;background:#c9dcf0"></div><div class="abs" style="left:58px;top:0;width:1px;height:24px;background:#c9dcf0"></div><div class="cb" style="left:8px;top:4px"></div><div class="c" style="left:59px;width:86px;padding-left:4.400px">Milewicz</div><div class="c" style="left:145px;width:63px">Danuta</div><div class="c y" style="left:213px;width:54px;padding:0"></div><div class="c n" style="left:213px;width:49.500px;padding-left:6px;letter-spacing:0.100px">M00002</div><div class="c n" style="left:267px;width:48.900px">9804013</div><div class="c" style="left:323px;width:81.500px;letter-spacing:0.280px">administracja</div><div class="c" style="left:409px;width:58px;letter-spacing:0.200px">2020<span style="margin:0 0.700px">/</span>04</div><div class="cb2" style="left:493px;top:4px"></div><div class="cb2" style="left:561px;top:4px"></div><div class="c y" style="left:601px;width:66px;padding:0"></div><div class="c" style="left:601px;width:61.500px;letter-spacing:-0.700px">ASKLDOD</div></div>
<div class="row alt" style="top:360px"><div class="abs" style="left:31px;top:0;width:1px;height:24px;background:#c9dcf0"></div><div class="abs" style="left:58px;top:0;width:1px;height:24px;background:#c9dcf0"></div><div class="cb" style="left:8px;top:4px"></div><div class="c" style="left:59px;width:86px;padding-left:4.400px">Nowacki</div><div class="c" style="left:145px;width:63px">Michał</div><div class="c y" style="left:213px;width:54px;padding:0"></div><div class="c n" style="left:213px;width:49.500px;padding-left:6px;letter-spacing:-0.270px">N00001</div><div class="c n" style="left:267px;width:48.900px">8009127</div><div class="c" style="left:323px;width:81.500px;letter-spacing:0.280px">administracja</div><div class="c" style="left:409px;width:58px;letter-spacing:0.200px">2020<span style="margin:0 0.700px">/</span>04</div><div class="cb2" style="left:493px;top:4px"></div><div class="cb2" style="left:561px;top:4px"></div><div class="c y" style="left:601px;width:66px;padding:0"></div><div class="c" style="left:601px;width:61.500px;letter-spacing:-0.700px">ASKLDOD</div></div>
<div class="row" style="top:384px"><div class="abs" style="left:31px;top:0;width:1px;height:24px;background:#c9dcf0"></div><div class="abs" style="left:58px;top:0;width:1px;height:24px;background:#c9dcf0"></div><div class="cb" style="left:8px;top:4px"></div><div class="c" style="left:59px;width:86px;padding-left:4.400px">Potomski</div><div class="c" style="left:145px;width:63px">Daniel</div><div class="c y" style="left:213px;width:54px;padding:0"></div><div class="c n" style="left:213px;width:49.500px;padding-left:6px;letter-spacing:-0.270px">P00001</div><div class="c n" style="left:267px;width:48.900px">7712277</div><div class="c" style="left:323px;width:81.500px;letter-spacing:0.280px">administracja</div><div class="c" style="left:409px;width:58px;letter-spacing:0.200px">2020<span style="margin:0 0.700px">/</span>04</div><div class="cb2" style="left:493px;top:4px"></div><div class="cb2" style="left:561px;top:4px"></div><div class="c y" style="left:601px;width:66px;padding:0"></div><div class="c" style="left:601px;width:61.500px;letter-spacing:-0.700px">ASKLDOD</div></div>
<div class="row alt" style="top:408px"><div class="abs" style="left:31px;top:0;width:1px;height:24px;background:#c9dcf0"></div><div class="abs" style="left:58px;top:0;width:1px;height:24px;background:#c9dcf0"></div><div class="cb" style="left:8px;top:4px"></div><div class="c" style="left:59px;width:86px;padding-left:4.400px">Robacka</div><div class="c" style="left:145px;width:63px">Magdalena</div><div class="c y" style="left:213px;width:54px;padding:0"></div><div class="c n" style="left:213px;width:49.500px;padding-left:6px;letter-spacing:-0.270px">R00001</div><div class="c n" style="left:267px;width:48.900px">8711241</div><div class="c" style="left:323px;width:81.500px;letter-spacing:0.280px">administracja</div><div class="c" style="left:409px;width:58px;letter-spacing:0.200px">2020<span style="margin:0 0.700px">/</span>04</div><div class="cb2" style="left:493px;top:4px"></div><div class="cb2" style="left:561px;top:4px"></div><div class="c y" style="left:601px;width:66px;padding:0"></div><div class="c" style="left:601px;width:61.500px;letter-spacing:-0.700px">ASKLDOD</div></div>
<div class="row" style="top:432px"><div class="abs" style="left:31px;top:0;width:1px;height:24px;background:#c9dcf0"></div><div class="abs" style="left:58px;top:0;width:1px;height:24px;background:#c9dcf0"></div><div class="cb" style="left:8px;top:4px"></div><div class="c" style="left:59px;width:86px;padding-left:4.400px">Rudzikowski</div><div class="c" style="left:145px;width:63px">Michał</div><div class="c y" style="left:213px;width:54px;padding:0"></div><div class="c n" style="left:213px;width:49.500px;padding-left:6px;letter-spacing:-0.270px">R00003</div><div class="c n" style="left:267px;width:48.900px">6602027</div><div class="c" style="left:323px;width:81.500px;letter-spacing:0.280px">administracja</div><div class="c" style="left:409px;width:58px;letter-spacing:0.200px">2020<span style="margin:0 0.700px">/</span>04</div><div class="cb2" style="left:493px;top:4px"></div><div class="cb2" style="left:561px;top:4px"></div><div class="c y" style="left:601px;width:66px;padding:0"></div><div class="c" style="left:601px;width:61.500px;letter-spacing:-0.700px">ASKLDOD</div></div>
<div class="row alt" style="top:456px"><div class="abs" style="left:31px;top:0;width:1px;height:24px;background:#c9dcf0"></div><div class="abs" style="left:58px;top:0;width:1px;height:24px;background:#c9dcf0"></div><div class="cb" style="left:8px;top:4px"></div><div class="c" style="left:59px;width:86px;padding-left:4.400px">Rumak</div><div class="c" style="left:145px;width:63px">Karolina</div><div class="c y" style="left:213px;width:54px;padding:0"></div><div class="c n" style="left:213px;width:49.500px;padding-left:6px;letter-spacing:-0.270px">R00002</div><div class="c n" style="left:267px;width:48.900px">7001023</div><div class="c" style="left:323px;width:81.500px;letter-spacing:0.280px">administracja</div><div class="c" style="left:409px;width:58px;letter-spacing:0.200px">2020<span style="margin:0 0.700px">/</span>04</div><div class="cb2" style="left:493px;top:4px"></div><div class="cb2" style="left:561px;top:4px"></div><div class="c y" style="left:601px;width:66px;padding:0"></div><div class="c" style="left:601px;width:61.500px;letter-spacing:-0.700px">ASKLDOD</div></div>
<div class="row" style="top:480px"><div class="abs" style="left:31px;top:0;width:1px;height:24px;background:#c9dcf0"></div><div class="abs" style="left:58px;top:0;width:1px;height:24px;background:#c9dcf0"></div><div class="cb" style="left:8px;top:4px"></div><div class="c" style="left:59px;width:86px;padding-left:4.400px">Sobala</div><div class="c" style="left:145px;width:63px">Monika</div><div class="c y" style="left:213px;width:54px;padding:0"></div><div class="c n" style="left:213px;width:49.500px;padding-left:6px;letter-spacing:-0.270px">S00001</div><div class="c n" style="left:267px;width:48.900px">7704023</div><div class="c" style="left:323px;width:81.500px;letter-spacing:0.280px">administracja</div><div class="c" style="left:409px;width:58px;letter-spacing:0.200px">2020<span style="margin:0 0.700px">/</span>04</div><div class="cb2" style="left:493px;top:4px"></div><div class="cb2" style="left:561px;top:4px"></div><div class="c y" style="left:601px;width:66px;padding:0"></div><div class="c" style="left:601px;width:61.500px;letter-spacing:-0.700px">ASKLDOD</div></div>
<div class="abs" style="left:5px;top:72px;width:1020px;height:1px;background:#5c5c5c"></div>
<div class="abs" style="left:5px;top:73px;width:1020px;height:1px;background:rgba(90,90,90,0.25)"></div>
<div class="abs" style="left:5px;top:95px;width:1020px;height:1px;background:#5c5c5c"></div>
<div class="abs" style="left:5px;top:94px;width:1020px;height:1px;background:rgba(90,90,90,0.25)"></div>
<div class="abs" style="left:606px;top:72px;width:66px;height:24px;border:2px solid #595959"></div>
<div class="abs" style="left:5px;top:192px;width:1020px;height:2px;background:#0d7dbe"></div>
<div class="abs" style="left:5px;top:214px;width:1020px;height:2px;background:#0d7dbe"></div>
<div class="abs" style="left:150px;top:192px;width:68px;height:24px;border:4px solid #0d7dbe;background:#fff"></div>
<div class="t" style="left:155px;top:197px;font-size:13px;letter-spacing:0.100px;color:#222">Jan</div>
</div>
<div class="abs" style="left:5px;top:681px;width:1021px;height:1px;background:#c4c4c4"></div>
<div class="abs" style="left:5px;top:682px;width:1037px;height:16px;background:#fff"></div>
<svg style="left:10px;top:685px" width="7" height="9" viewBox="0 0 7 9"><path d="M6 0.600L1 4.500L6 8.400" stroke="#c2c2c2" stroke-width="1.200" fill="none"/></svg>
<div class="abs" style="left:20px;top:686px;width:976px;height:8px;background:#b9b9b9"></div>
<svg style="left:1014px;top:685px" width="7" height="9" viewBox="0 0 7 9"><path d="M1 0.600L6 4.500L1 8.400" stroke="#c2c2c2" stroke-width="1.200" fill="none"/></svg>
<div class="abs" style="left:0;top:48px;width:1px;height:652px;background:#1f78c0"></div>
<div class="abs" style="left:1042px;top:48px;width:1px;height:652px;background:#0aa0e0"></div>
<div class="abs" style="left:0;top:699px;width:1043px;height:1px;background:linear-gradient(to right,#1f78c0,#1690d3 40%,#0aa0e0 65%)"></div><div class="abs" style="left:0;top:698px;width:1043px;height:1px;opacity:0.45;background:linear-gradient(to right,#1f78c0,#1690d3 40%,#0aa0e0 65%)"></div>
</div>
</body></html>
